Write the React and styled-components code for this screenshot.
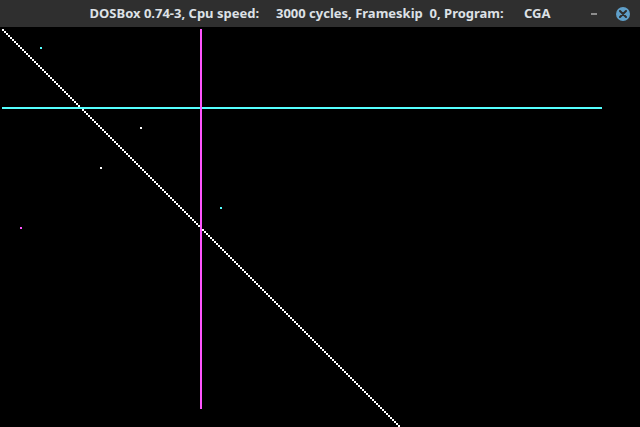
import React from "react";
import styled, { createGlobalStyle } from "styled-components";

const GlobalStyle = createGlobalStyle`
  html, body {
    margin: 0;
    padding: 0;
    background: #000;
    overflow: hidden;
  }
`;

const Window = styled.div`
  width: 640px;
  height: 427px;
  display: flex;
  flex-direction: column;
  background: #000;
`;

const TitleBar = styled.div`
  height: 27px;
  flex: none;
  background: #2f2f2f;
  display: grid;
  grid-template-columns: 1fr auto 1fr;
  align-items: center;
  font-family: "Noto Sans", "Open Sans", sans-serif;
  font-weight: bold;
  font-size: 13px;
  color: #dde1e6;
`;

const Title = styled.span`
  grid-column: 2;
  white-space: pre;
  line-height: 27px;
`;

const Controls = styled.div`
  grid-column: 3;
  justify-self: end;
  display: flex;
  align-items: center;
  gap: 19px;
  padding-right: 10px;
`;

const MinBtn = styled.span`
  width: 6px;
  height: 2px;
  background: #8d8d8d;
`;

const CloseBtn = styled.span`
  width: 14px;
  height: 14px;
  border-radius: 50%;
  background: #5f9fc9;
  display: flex;
  align-items: center;
  justify-content: center;
`;

const Screen = styled.svg`
  display: block;
  width: 640px;
  height: 400px;
  shape-rendering: crispEdges;
`;

const CYAN = "#55ffff";
const MAGENTA = "#ff55ff";
const WHITE = "#ffffff";

// cga 320x200 pixels, drawn at 2x
const dots = [
  { x: 20, y: 10, c: CYAN },
  { x: 70, y: 50, c: WHITE },
  { x: 50, y: 70, c: WHITE },
  { x: 110, y: 90, c: CYAN },
  { x: 10, y: 100, c: MAGENTA },
];

const diagonal = Array.from({ length: 199 }, (_, i) => i + 1);

export default function App() {
  return (
    <Window>
      <GlobalStyle />
      <TitleBar>
        <Title>{"DOSBox 0.74-3, Cpu speed:     3000 cycles, Frameskip  0, Program:      CGA"}</Title>
        <Controls>
          <MinBtn />
          <CloseBtn>
            <svg width="8" height="8" viewBox="0 0 8 8">
              <path d="M1 1L7 7M7 1L1 7" stroke="#2f2f2f" strokeWidth="2" strokeLinecap="round" />
            </svg>
          </CloseBtn>
        </Controls>
      </TitleBar>
      <Screen viewBox="0 0 320 200">
        <rect x="0" y="0" width="320" height="200" fill="#000" />
        {diagonal.map((i) => (
          <rect key={i} x={i} y={i} width="1" height="1" fill={WHITE} />
        ))}
        <rect x="1" y="40" width="300" height="1" fill={CYAN} />
        <rect x="100" y="1" width="1" height="190" fill={MAGENTA} />
        {dots.map((d, i) => (
          <rect key={i} x={d.x} y={d.y} width="1" height="1" fill={d.c} />
        ))}
      </Screen>
    </Window>
  );
}
